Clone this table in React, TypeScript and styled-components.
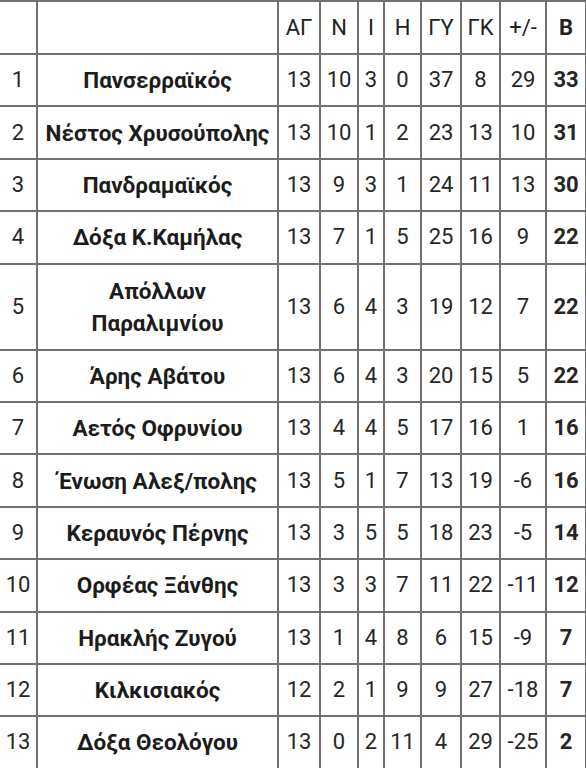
import React from 'react'
import styled, { createGlobalStyle } from 'styled-components'

const GlobalStyle = createGlobalStyle`
  html, body {
    margin: 0;
    padding: 0;
    background: #ffffff;
  }
  body {
    font-family: Roboto, 'Noto Sans', 'Liberation Sans', sans-serif;
    color: #222222;
  }
`

const LINE = '2px solid #717171'

const StandingsTable = styled.table`
  width: 586px;
  border-collapse: collapse;
  table-layout: fixed;
  font-size: 22px;
  line-height: 32px;
  border-top: ${LINE};
`

const HeadCell = styled.th<{ bold?: boolean }>`
  height: 51px;
  padding: 0;
  text-align: center;
  vertical-align: middle;
  font-weight: ${({ bold }) => (bold ? 700 : 400)};
  color: #222222;
  border-right: ${LINE};
  border-bottom: ${LINE};
`

const Row = styled.tr<{ tall?: boolean }>`
  height: ${({ tall }) => (tall ? '86px' : '52.4px')};
`

const Cell = styled.td<{ bold?: boolean }>`
  padding: 0;
  text-align: center;
  vertical-align: middle;
  font-weight: ${({ bold }) => (bold ? 700 : 400)};
  color: #262626;
  border-right: ${LINE};
  border-bottom: ${LINE};
  white-space: nowrap;
`

const TeamCell = styled(Cell)`
  font-size: 22.5px;
  font-weight: 700;
  color: #1c1c1c;
  white-space: pre-line;
  padding: 0 2px;
`

const COLUMNS = [37, 241, 42, 38, 26, 37, 40, 39, 46, 40]

const HEADERS = ['', '', 'ΑΓ', 'Ν', 'Ι', 'Η', 'ΓΥ', 'ΓΚ', '+/-', 'Β']

type Team = {
  name: string
  played: number
  won: number
  drawn: number
  lost: number
  scored: number
  conceded: number
  diff: number
  points: number
  tall?: boolean
}

const TEAMS: Team[] = [
  { name: 'Πανσερραϊκός', played: 13, won: 10, drawn: 3, lost: 0, scored: 37, conceded: 8, diff: 29, points: 33 },
  { name: 'Νέστος Χρυσούπολης', played: 13, won: 10, drawn: 1, lost: 2, scored: 23, conceded: 13, diff: 10, points: 31 },
  { name: 'Πανδραμαϊκός', played: 13, won: 9, drawn: 3, lost: 1, scored: 24, conceded: 11, diff: 13, points: 30 },
  { name: 'Δόξα Κ.Καμήλας', played: 13, won: 7, drawn: 1, lost: 5, scored: 25, conceded: 16, diff: 9, points: 22 },
  { name: 'Απόλλων\nΠαραλιμνίου', played: 13, won: 6, drawn: 4, lost: 3, scored: 19, conceded: 12, diff: 7, points: 22, tall: true },
  { name: 'Άρης Αβάτου', played: 13, won: 6, drawn: 4, lost: 3, scored: 20, conceded: 15, diff: 5, points: 22 },
  { name: 'Αετός Οφρυνίου', played: 13, won: 4, drawn: 4, lost: 5, scored: 17, conceded: 16, diff: 1, points: 16 },
  { name: 'Ένωση Αλεξ/πολης', played: 13, won: 5, drawn: 1, lost: 7, scored: 13, conceded: 19, diff: -6, points: 16 },
  { name: 'Κεραυνός Πέρνης', played: 13, won: 3, drawn: 5, lost: 5, scored: 18, conceded: 23, diff: -5, points: 14 },
  { name: 'Ορφέας Ξάνθης', played: 13, won: 3, drawn: 3, lost: 7, scored: 11, conceded: 22, diff: -11, points: 12 },
  { name: 'Ηρακλής Ζυγού', played: 13, won: 1, drawn: 4, lost: 8, scored: 6, conceded: 15, diff: -9, points: 7 },
  { name: 'Κιλκισιακός', played: 12, won: 2, drawn: 1, lost: 9, scored: 9, conceded: 27, diff: -18, points: 7 },
  { name: 'Δόξα Θεολόγου', played: 13, won: 0, drawn: 2, lost: 11, scored: 4, conceded: 29, diff: -25, points: 2 }
]

export default function App() {
  return (
    <>
      <GlobalStyle />
      <StandingsTable>
        <colgroup>
          {COLUMNS.map((w, i) => (
            <col key={i} style={{ width: `${w}px` }} />
          ))}
        </colgroup>
        <thead>
          <tr>
            {HEADERS.map((h, i) => (
              <HeadCell key={i} bold={h === 'Β'}>
                {h}
              </HeadCell>
            ))}
          </tr>
        </thead>
        <tbody>
          {TEAMS.map((t, i) => (
            <Row key={t.name} tall={t.tall}>
              <Cell>{i + 1}</Cell>
              <TeamCell>{t.name}</TeamCell>
              <Cell>{t.played}</Cell>
              <Cell>{t.won}</Cell>
              <Cell>{t.drawn}</Cell>
              <Cell>{t.lost}</Cell>
              <Cell>{t.scored}</Cell>
              <Cell>{t.conceded}</Cell>
              <Cell>{t.diff}</Cell>
              <Cell bold>{t.points}</Cell>
            </Row>
          ))}
        </tbody>
      </StandingsTable>
    </>
  )
}
